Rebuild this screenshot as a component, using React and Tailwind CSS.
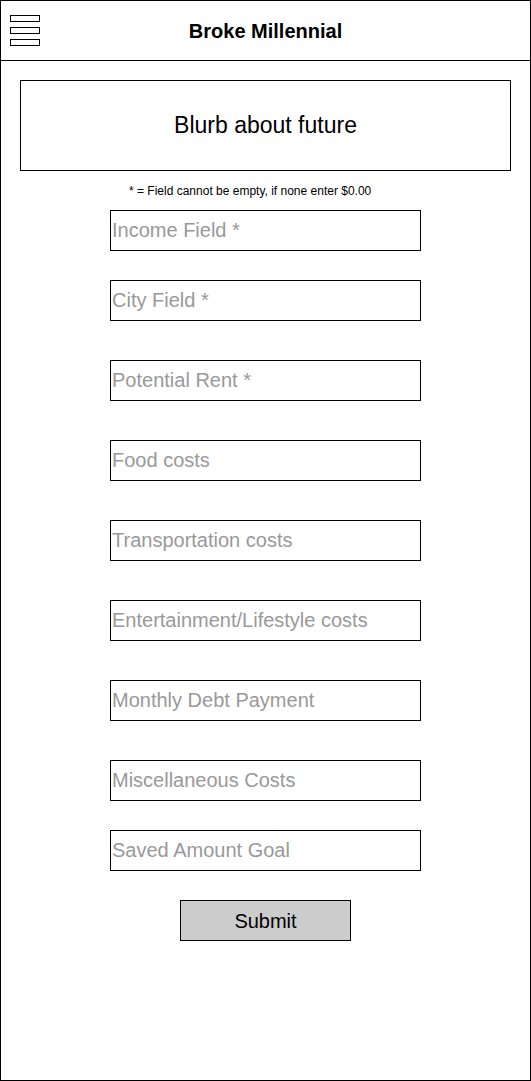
import React from "react";

const fields = [
  { label: "Income Field *", mt: "mt-0" },
  { label: "City Field *", mt: "mt-[29px]" },
  { label: "Potential Rent *", mt: "mt-[39px]" },
  { label: "Food costs", mt: "mt-[39px]" },
  { label: "Transportation costs", mt: "mt-[39px]" },
  { label: "Entertainment/Lifestyle costs", mt: "mt-[39px]" },
  { label: "Monthly Debt Payment", mt: "mt-[39px]" },
  { label: "Miscellaneous Costs", mt: "mt-[39px]" },
  { label: "Saved Amount Goal", mt: "mt-[29px]" },
];

export default function App() {
  return (
    <div
      className="w-[531px] h-[1081px] border border-black bg-white flex flex-col"
      style={{ fontFamily: '"Liberation Sans", Arial, sans-serif' }}
    >
      <header className="h-[60px] border-b border-black flex items-center relative shrink-0">
        <div className="absolute left-[9px] top-[14px] flex flex-col gap-[5px]">
          <div className="w-[30px] h-[7px] border border-black bg-white" />
          <div className="w-[30px] h-[7px] border border-black bg-white" />
          <div className="w-[30px] h-[7px] border border-black bg-white" />
        </div>
        <h1 className="w-full text-center text-[20px] font-bold text-black leading-none">
          Broke Millennial
        </h1>
      </header>
      <main className="flex flex-col">
        <div className="ml-[19px] mt-[19px] w-[491px] h-[91px] border border-black flex items-center justify-center">
          <span className="text-[23px] text-black">Blurb about future</span>
        </div>
        <p className="mt-[12px] h-[16px] text-[12px] leading-[16px] text-black pl-[128px]">
          * = Field cannot be empty, if none enter $0.00
        </p>
        <form className="flex flex-col mt-[11px]" onSubmit={(e) => e.preventDefault()}>
          {fields.map((f) => (
            <input
              key={f.label}
              type="text"
              placeholder={f.label}
              className={`${f.mt} ml-[109px] w-[311px] h-[41px] border border-black bg-white px-[1px] text-[20px] text-black placeholder:text-[#999999] outline-none`}
            />
          ))}
          <button
            type="submit"
            className="mt-[29px] ml-[179px] w-[171px] h-[41px] border border-black bg-[#cccccc] text-[20px] text-black"
          >
            Submit
          </button>
        </form>
      </main>
    </div>
  );
}
